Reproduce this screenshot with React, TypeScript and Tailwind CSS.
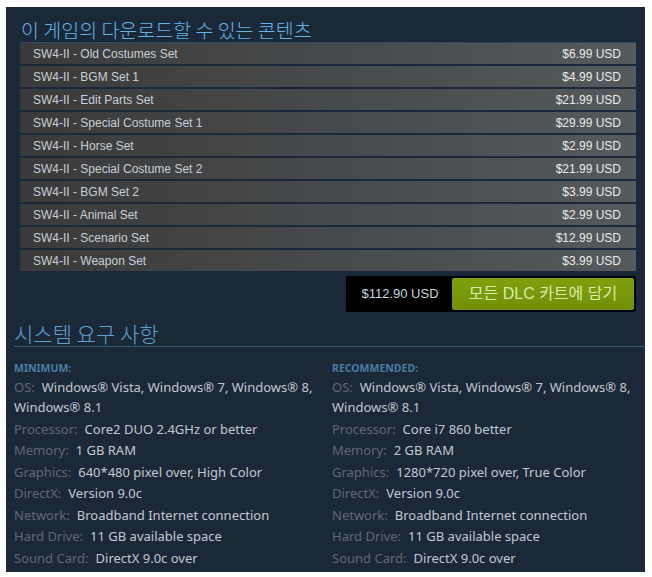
const dlcs = [
  { name: 'SW4-II - Old Costumes Set', price: '$6.99 USD' },
  { name: 'SW4-II - BGM Set 1', price: '$4.99 USD' },
  { name: 'SW4-II - Edit Parts Set', price: '$21.99 USD' },
  { name: 'SW4-II - Special Costume Set 1', price: '$29.99 USD' },
  { name: 'SW4-II - Horse Set', price: '$2.99 USD' },
  { name: 'SW4-II - Special Costume Set 2', price: '$21.99 USD' },
  { name: 'SW4-II - BGM Set 2', price: '$3.99 USD' },
  { name: 'SW4-II - Animal Set', price: '$2.99 USD' },
  { name: 'SW4-II - Scenario Set', price: '$12.99 USD' },
  { name: 'SW4-II - Weapon Set', price: '$3.99 USD' },
];

const minimum = [
  ['OS:', 'Windows® Vista, Windows® 7, Windows® 8, Windows® 8.1'],
  ['Processor:', 'Core2 DUO 2.4GHz or better'],
  ['Memory:', '1 GB RAM'],
  ['Graphics:', '640*480 pixel over, High Color'],
  ['DirectX:', 'Version 9.0c'],
  ['Network:', 'Broadband Internet connection'],
  ['Hard Drive:', '11 GB available space'],
  ['Sound Card:', 'DirectX 9.0c over'],
];

const recommended = [
  ['OS:', 'Windows® Vista, Windows® 7, Windows® 8, Windows® 8.1'],
  ['Processor:', 'Core i7 860 better'],
  ['Memory:', '2 GB RAM'],
  ['Graphics:', '1280*720 pixel over, True Color'],
  ['DirectX:', 'Version 9.0c'],
  ['Network:', 'Broadband Internet connection'],
  ['Hard Drive:', '11 GB available space'],
  ['Sound Card:', 'DirectX 9.0c over'],
];

const KR = { fontFamily: '"Noto Sans CJK KR", "Noto Sans", sans-serif' };
const ARIAL = { fontFamily: '"Liberation Sans", "Noto Sans CJK KR", sans-serif' };
const SANS = { fontFamily: '"Noto Sans", "Liberation Sans", sans-serif' };

function ReqColumn({ title, items }: { title: string; items: string[][] }) {
  return (
    <div className="pr-[10px]" style={SANS}>
      <div className="text-[10.5px] leading-[14px] font-bold uppercase text-[#4a7ea2] mb-[2px]">{title}</div>
      <ul>
        {items.map(([label, value]) => (
          <li key={label} className="text-[13px] leading-[20px] mb-[1.5px]">
            <span className="text-[#5e6873] mr-[7px]">{label}</span>
            <span className="text-[#c0c8cf]">{value}</span>
          </li>
        ))}
      </ul>
    </div>
  );
}

export default function App() {
  return (
    <div className="w-full h-[577px] bg-white pt-[7px] pl-[6px]">
      <div className="w-[639px] h-[565px] bg-[#1b2838]">
        <div className="ml-[14px] mr-[9px]">
          <h2
            className="pl-[1px] pt-[11px] text-[19.5px] leading-[24px] font-light text-[#62b5e8] border-b border-[#2d4c63]"
            style={KR}
          >
            이 게임의 다운로드할 수 있는 콘텐츠
          </h2>
          <div className="flex flex-col gap-[2px]">
            {dlcs.map((d) => (
              <div
                key={d.name}
                className="h-[21px] flex items-center justify-between pl-[13px] pr-[15px] bg-gradient-to-r from-[#3a3a3b] to-[#545a5d] text-[12px]"
                style={ARIAL}
              >
                <span className="text-[#c9cfd4]">{d.name}</span>
                <span className="text-[#e8ebed]">{d.price}</span>
              </div>
            ))}
          </div>
          <div className="flex justify-end mt-[5px]">
            <div className="flex items-center bg-black p-[2px] rounded-[2px]">
              <div className="w-[104px] text-center text-[13px] text-[#c6d4df]" style={ARIAL}>
                $112.90 USD
              </div>
              <button
                className="w-[182px] h-[32px] rounded-[2px] bg-gradient-to-b from-[#80a00c] to-[#728f09] text-[16px] text-[#d2efa9]"
                style={ARIAL}
              >
                모든 DLC 카트에 담기
              </button>
            </div>
          </div>
        </div>

        <div className="ml-[8px]">
          <h2
            className="pt-[9px] text-[21px] leading-[25px] font-light text-[#5ea3d0] border-b border-[#2f5a78]"
            style={KR}
          >
            시스템 요구 사항
          </h2>
          <div className="grid grid-cols-[318px_1fr] mt-[14px]">
            <ReqColumn title="Minimum:" items={minimum} />
            <ReqColumn title="Recommended:" items={recommended} />
          </div>
        </div>
      </div>
    </div>
  );
}
